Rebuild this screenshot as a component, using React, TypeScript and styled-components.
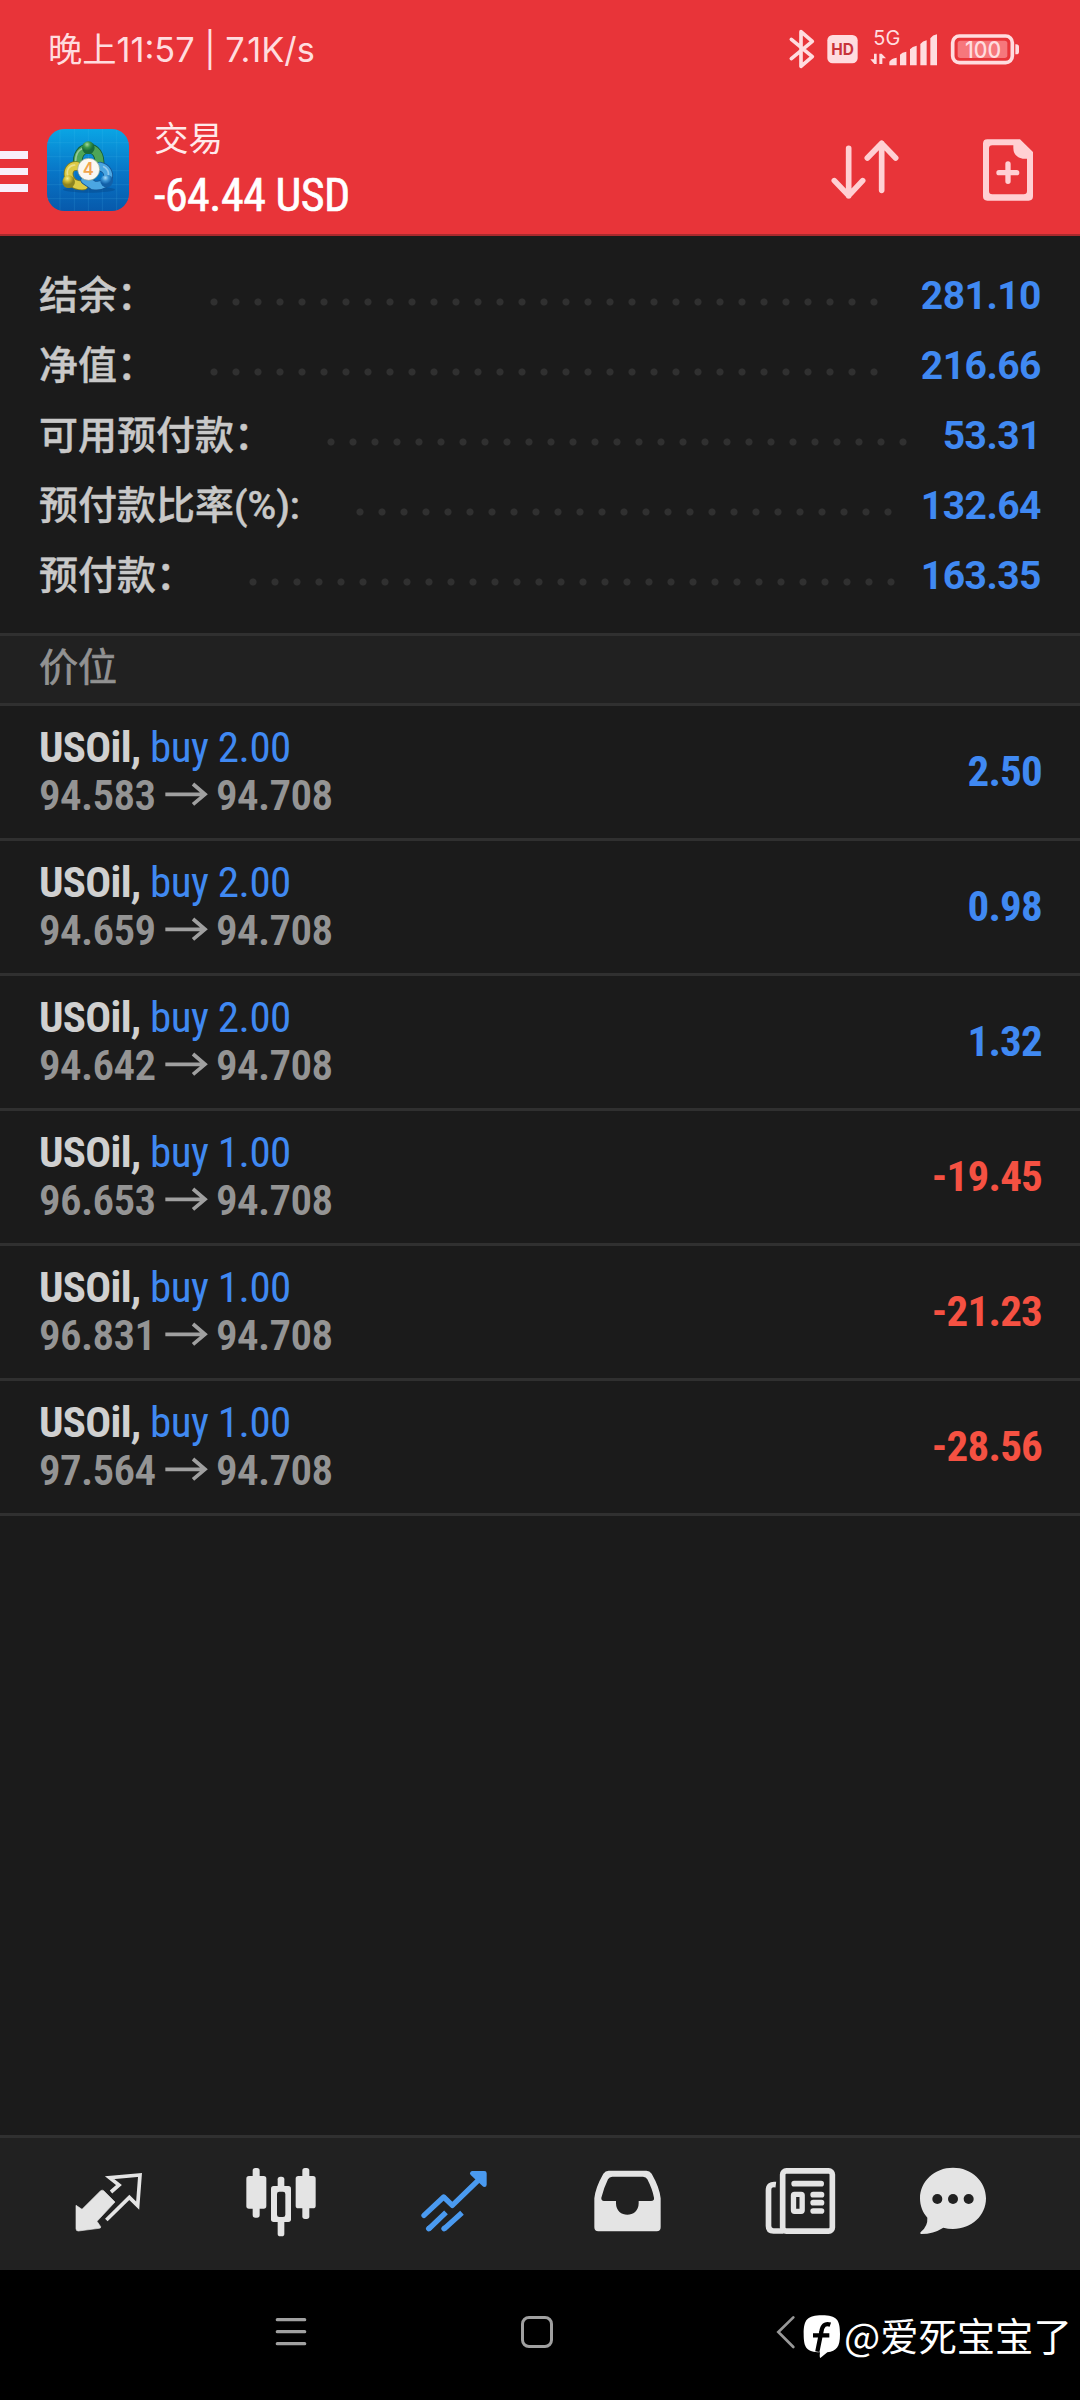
import React from "react";
import styled, { createGlobalStyle } from "styled-components";

const Global = createGlobalStyle`
  * { box-sizing: border-box; }
  body { margin: 0; background: #000; }
  svg { display: block; flex: none; overflow: visible; }
`;

const sans = `Roboto, "Noto Sans CJK SC", sans-serif`;
const condensed = `"Roboto Condensed", Roboto, "Noto Sans CJK SC", sans-serif`;
const blue = "#4089f2";
const red = "#f55142";
const pink = "#ffdcdf";
const rose = "#ffd0d3";
const pale = "#e4e4e4";
const line = "#303030";

const Screen = styled.div`
  width: 1080px;
  height: 2400px;
  display: flex;
  flex-direction: column;
  overflow: hidden;
  background: #1b1b1b;
  font-family: ${sans};
`;

const Header = styled.header`
  height: 236px;
  background: #e83439;
  border-bottom: 2px solid #a82a2d;
  display: flex;
  flex-direction: column;
  flex: none;
`;

const StatusBar = styled.div`
  height: 106px;
  padding: 0 60px 8px 48px;
  display: flex;
  align-items: center;
`;

const Clock = styled.span`
  flex: 1;
  padding-top: 2px;
  font: 400 34.3px/50px Inter, "Noto Sans CJK SC", sans-serif;
  color: ${pink};
  white-space: pre;
`;

const StatusIcons = styled.div`
  display: flex;
  align-items: center;
  gap: 12px;
`;

const AppBar = styled.div`
  height: 128px;
  display: flex;
  align-items: center;
`;

const MenuButton = styled.button`
  width: 28px;
  margin: 3px 19px 0 0;
  padding: 0;
  border: 0;
  background: none;
  display: flex;
  flex-direction: column;
  gap: 9px;
`;

const MenuBar = styled.i`
  height: 7.5px;
  background: #f8f0fa;
`;

const Titles = styled.div`
  flex: 1;
  margin: 0 0 0 25px;
  display: flex;
  flex-direction: column;
`;

const Title = styled.div`
  font-size: 34.5px;
  line-height: 50px;
  color: #ffe9ea;
`;

const Profit = styled.div`
  font: 400 46px/62px ${condensed};
  font-stretch: 75%;
  letter-spacing: -0.5px;
  color: #fff;
  -webkit-text-stroke: 0.6px #fff;
`;

const Actions = styled.div`
  display: flex;
  gap: 81px;
  padding-right: 45px;
`;

const Summary = styled.dl`
  margin: 0;
  height: 397px;
  padding: 25px 39px 0;
  flex: none;
`;

const SummaryRow = styled.div`
  height: 70px;
  display: flex;
  align-items: center;
`;

const Label = styled.dt`
  font-size: 39px;
  font-weight: 500;
  line-height: 70px;
  color: #c8c8c8;
  -webkit-text-stroke: 0.4px #c8c8c8;
`;

const Dots = styled.span<{ $count: number; $lead: number }>`
  width: ${(p) => p.$count * 22}px;
  height: 8px;
  margin: 12px 0 0 ${(p) => p.$lead}px;
  background: radial-gradient(circle, #303030 3px, transparent 4px) 0 0 / 22px 8px;
`;

const Amount = styled.dd`
  margin: 0 0 0 auto;
  font-size: 39px;
  font-weight: 700;
  letter-spacing: -0.5px;
  line-height: 70px;
  color: ${blue};
`;

const SectionTitle = styled.h2`
  margin: 0;
  height: 73px;
  flex: none;
  padding: 0 39px;
  border-top: 3px solid ${line};
  border-bottom: 3px solid ${line};
  background: #212121;
  font-size: 39px;
  font-weight: 400;
  line-height: 64px;
  color: #929292;
  -webkit-text-stroke: 0.7px #929292;
`;

const SectionBody = styled.main`
  flex: 1;
`;

const Position = styled.div`
  height: 135px;
  padding: 0 38px 0 39px;
  border-bottom: 3px solid ${line};
  display: flex;
  align-items: center;
  justify-content: space-between;
  font-family: ${condensed};
  font-stretch: 75%;
  font-size: 43px;
  letter-spacing: -0.5px;
`;

const Deal = styled.div`
  padding-bottom: 2px;
  display: flex;
  flex-direction: column;
`;

const Order = styled.div`
  line-height: 48px;
  color: ${blue};
`;

const Symbol = styled.b`
  font-weight: 700;
  letter-spacing: -0.7px;
  color: #d0d0d0;
`;

const Prices = styled.div`
  display: flex;
  align-items: center;
  line-height: 48px;
  font-weight: 600;
  letter-spacing: -0.65px;
  color: #949494;
`;

const Result = styled.div<{ $loss: boolean }>`
  padding-bottom: 2px;
  font-weight: 700;
  letter-spacing: -0.8px;
  color: ${(p) => (p.$loss ? red : blue)};
`;

const TabBar = styled.nav`
  height: 135px;
  flex: none;
  padding-left: 21.5px;
  border-top: 3px solid ${line};
  background: #212121;
  display: flex;
`;

const Tab = styled.a<{ $width?: number }>`
  width: ${(p) => p.$width ?? 173}px;
  display: flex;
  align-items: center;
  justify-content: center;
`;

const SystemBar = styled.footer`
  height: 130px;
  flex: none;
  padding: 0 0 6px 275px;
  background: #000;
  display: flex;
  align-items: center;
`;

const HomeButton = styled.i`
  width: 32px;
  height: 32px;
  flex: none;
  margin: 0 223px 0 214px;
  border: 3px solid #a0a0a0;
  border-radius: 8px;
`;

const Watermark = styled.div`
  display: flex;
  align-items: center;
  gap: 3px;
  margin-left: 7px;
  padding-top: 6px;
  font: 400 38.3px/56px "Noto Sans CJK SC", sans-serif;
  color: #fff;
  white-space: nowrap;
`;

const summary = [
  { label: "结余：", value: "281.10", dots: 31, lead: 46.5 },
  { label: "净值：", value: "216.66", dots: 31, lead: 46.5 },
  { label: "可用预付款：", value: "53.31", dots: 27, lead: 46.5 },
  { label: "预付款比率(%):", value: "132.64", dots: 25, lead: 48.5 },
  { label: "预付款：", value: "163.35", dots: 30, lead: 46.5 },
];

const positions = [
  { volume: "2.00", open: "94.583", result: "2.50" },
  { volume: "2.00", open: "94.659", result: "0.98" },
  { volume: "2.00", open: "94.642", result: "1.32" },
  { volume: "1.00", open: "96.653", result: "-19.45" },
  { volume: "1.00", open: "96.831", result: "-21.23" },
  { volume: "1.00", open: "97.564", result: "-28.56" },
];

const Bluetooth = () => (
  <svg width="26" height="42" viewBox="147 83 78 126" fill="none" stroke={pink} strokeWidth="11" strokeLinejoin="round" strokeLinecap="round">
    <path d="M154 117L217 169L183 198V94L217 123L154 175" />
  </svg>
);

const Hd = () => (
  <svg width="31" height="42" viewBox="262 83 93 126">
    <rect x="263" y="104" width="91" height="85" rx="16" fill={pink} />
    <text x="308.500" y="164" textAnchor="middle" textLength="68" lengthAdjust="spacingAndGlyphs" fontFamily="Inter, sans-serif" fontWeight="700" fontSize="46" fill="#c8333a">HD</text>
  </svg>
);

const Signal = () => (
  <svg width="68" height="42" viewBox="390 83 204 126" fill={pink}>
    <text x="400" y="135" textLength="81" lengthAdjust="spacingAndGlyphs" fontFamily="Inter, sans-serif" fontSize="60">5G</text>
    <path d="M402 160h8v31h-7l-12-14h11zM418 191v-31h7l13 14h-11v17z" />
    <path d="M448 195V184Q455 174 470 172V195zM480 195V163Q486 156 499 154V195zM510 195V147Q517 138 530 136V195zM541 195V131Q548 122 560 120V195zM571 195V114Q578 104 591 102V195z" />
  </svg>
);

const Battery = () => (
  <svg width="70" height="42" viewBox="630 83 210 126">
    <rect x="638" y="107" width="179" height="80" rx="20" fill="none" stroke={pink} strokeWidth="11" />
    <rect x="653" y="121" width="149" height="52" rx="8" fill="#f6777c" />
    <path d="M826 132h3a8 8 0 0 1 8 8v14a8 8 0 0 1-8 8h-3z" fill={pink} />
    <text x="729" y="172" textAnchor="middle" textLength="108" lengthAdjust="spacingAndGlyphs" fontFamily="Inter, sans-serif" fontWeight="500" fontSize="67" fill={pink}>100</text>
  </svg>
);

const AppLogo = () => (
  <svg width="82" height="82" viewBox="51 57 246 246">
    <defs>
      <linearGradient id="sky" x1="0" y1="0" x2="0" y2="1">
        <stop offset="0" stopColor="#0aa5e4" />
        <stop offset=".5" stopColor="#0877c8" />
        <stop offset="1" stopColor="#0759ab" />
      </linearGradient>
      <radialGradient id="green" cx=".4" cy=".25"><stop offset="0" stopColor="#a5d69a" /><stop offset=".5" stopColor="#3c9a4a" /><stop offset="1" stopColor="#1a6b39" /></radialGradient>
      <radialGradient id="gold" cx=".4" cy=".25"><stop offset="0" stopColor="#f6ee8e" /><stop offset=".5" stopColor="#cdb932" /><stop offset="1" stopColor="#8d8420" /></radialGradient>
      <radialGradient id="azure" cx=".4" cy=".25"><stop offset="0" stopColor="#a8dcfa" /><stop offset=".5" stopColor="#3c94d6" /><stop offset="1" stopColor="#1260a8" /></radialGradient>
    </defs>
    <rect x="51" y="57" width="246" height="246" rx="52" fill="url(#sky)" />
    <path d="M90 59V301M133 57V303M175 57V303M217 57V303M260 59V301M51 98H297M51 140H297M51 182H297M51 224H297M51 266H297" stroke="#5cc5f0" strokeOpacity=".22" strokeWidth="2" />
    <ellipse cx="177" cy="239" rx="78" ry="9" fill="#063c78" opacity=".35" />
    <g fill="none" strokeLinecap="round">
      <path d="M144 166C134 100 216 96 208 168" stroke="#155c36" strokeWidth="29" />
      <path d="M144 166C134 100 216 96 208 168" stroke="#4ea557" strokeWidth="24" />
      <path d="M139 168C104 166 106 230 161 226" stroke="#7d7a22" strokeWidth="29" />
      <path d="M139 168C104 166 106 230 161 226" stroke="#dccb45" strokeWidth="24" />
      <path d="M211 170C248 178 242 234 190 226L166 210" stroke="#145594" strokeWidth="29" />
      <path d="M211 170C248 178 242 234 190 226L166 210" stroke="#4ba6e2" strokeWidth="24" />
      <path d="M137 151C139 119 158 110 175 120M114 199C107 180 118 166 134 165M221 170C240 180 237 198 230 203" stroke="#fff" strokeOpacity=".4" strokeWidth="5" />
    </g>
    <circle cx="175" cy="113" r="19" fill="url(#green)" />
    <circle cx="116" cy="215" r="19" fill="url(#gold)" />
    <circle cx="230" cy="213" r="19" fill="url(#azure)" />
    <circle cx="176" cy="178" r="33" fill="#faf7f2" stroke="#8ba18c" strokeWidth="2" />
    <text x="175" y="196" textAnchor="middle" fontFamily="Inter, sans-serif" fontWeight="600" fontSize="50" fill="#f0a54e">4</text>
  </svg>
);

const SortIcon = () => (
  <svg width="70" height="66" viewBox="270 411 210 198" fill="none" stroke={rose} strokeWidth="17" strokeLinecap="round" strokeLinejoin="round">
    <path d="M326 445V587M283 542L326 587L368 542M425 571V430M382 474L425 430L467 474" />
  </svg>
);

const NewOrderIcon = () => (
  <svg width="54" height="66" viewBox="723 411 162 198">
    <path fillRule="evenodd" fill={rose} d="M742 418H840L879 456V589Q879 602 866 602H742Q729 602 729 589V431Q729 418 742 418ZM757 436Q747 436 747 446V573Q747 583 757 583H851Q861 583 861 573V476H848Q820 471 820 444V436Z" />
    <path d="M804 492V544M777 518H830" stroke={rose} strokeWidth="16" strokeLinecap="round" />
  </svg>
);

const PriceArrow = () => (
  <svg width="60.500" height="26" viewBox="467 485 181.500 78" fill="none" stroke="#a0a0a0" strokeWidth="11">
    <path d="M498 522H617M581 491L617 522L581 552" />
  </svg>
);

const QuotesIcon = () => (
  <svg width="80" height="80" viewBox="204 132 240 240">
    <path d="M228 256L246 268L302 212Q307 209 311 212L345 246L291 304L302 320Q303 325 297 325L235 333Q228 333 228 326Z" fill={pale} stroke={pale} strokeWidth="2" strokeLinejoin="round" />
    <path d="M333 216L357 195L329 173L420 165L413 257L388 232L319 300" fill="none" stroke={pale} strokeWidth="11" />
  </svg>
);

const ChartIcon = () => (
  <svg width="80" height="80" viewBox="723 132 240 240" fill={pale}>
    <rect x="739" y="168" width="60" height="98" rx="8" />
    <rect x="758" y="144" width="21" height="149" rx="8" />
    <rect x="887" y="168" width="60" height="97" rx="8" />
    <rect x="907" y="144" width="21" height="153" rx="8" />
    <rect x="833" y="170" width="20" height="40" rx="8" />
    <rect x="833" y="295" width="20" height="54" rx="8" />
    <rect x="813" y="198" width="60" height="108" rx="8" />
    <rect x="831" y="215" width="25" height="76" rx="7" fill="#212121" />
  </svg>
);

const TradeIcon = () => (
  <svg width="80" height="80" viewBox="162 132 240 240" fill="none" stroke="#4a9af0" strokeWidth="16" strokeLinecap="round" strokeLinejoin="round">
    <path d="M192 286L251 231L277 256L370 166" />
    <path d="M206 327L258 277M252 327L306 278" strokeLinecap="butt" />
    <path d="M206 326L207 325M252 326L253 325" />
    <path d="M337 160H373V194Z" fill="#4a9af0" strokeWidth="14" />
  </svg>
);

const HistoryIcon = () => (
  <svg width="80" height="80" viewBox="681 132 240 240">
    <path fillRule="evenodd" fill={pale} d="M746 152H859Q869 152 875 161Q899 203 902 235V322Q902 334 890 334H715Q703 334 703 322V235Q706 203 730 161Q736 152 746 152ZM757 170Q748 170 744 178Q731 205 724 233Q723 242 732 243H768V250C768 296 836 296 836 250V243H873Q884 242 882 233Q877 207 862 178Q858 170 849 170Z" />
  </svg>
);

const NewsIcon = () => (
  <svg width="80" height="80" viewBox="121.500 132 240 240" fill="none" stroke={pale} strokeWidth="17">
    <rect x="189.500" y="152.500" width="149" height="181" rx="11" />
    <path d="M169 194C153 192 147 198 147 211V318Q147 333 162 333H192" />
    <path d="M224 191H305M281 224H306M281 248H306M281 273H306" strokeLinecap="round" />
    <rect x="222" y="223" width="26" height="51" rx="3" strokeWidth="16" />
  </svg>
);

const ChatIcon = () => (
  <svg width="80" height="80" viewBox="579 132 240 240">
    <path fill={pale} d="M699 143C755 143 798 184 798 235C798 287 755 327 699 327Q684 327 670 323Q640 342 604 342Q598 340 603 335Q624 318 622 293C608 278 600 257 600 235C600 184 643 143 699 143Z" />
    <g fill="#212121"><circle cx="652" cy="237" r="15" /><circle cx="699" cy="237" r="15" /><circle cx="746" cy="237" r="15" /></g>
  </svg>
);

const RecentsIcon = () => (
  <svg width="32" height="32" viewBox="105 138 96 96" stroke="#a0a0a0" strokeWidth="10" strokeLinecap="round">
    <path d="M112 149H194M112 185H194M112 221H194" />
  </svg>
);

const BackIcon = () => (
  <svg width="20" height="34" viewBox="108 135 60 102" fill="none" stroke="#989898" strokeWidth="8" strokeLinecap="round">
    <path d="M160 142L115 186L160 231" />
  </svg>
);

const BubbleLogo = () => (
  <svg width="38" height="44" viewBox="189 144 114 132">
    <path fill="#fff" d="M246 151C290 151 300 164 300 207C300 246 290 258 262 262L241 279Q238 278 240 262C200 261 191 249 191 207C191 164 202 151 246 151Z" />
    <path d="M271 179Q248 171 244 201L232 260M219 211H268" fill="none" stroke="#000" strokeWidth="13" />
  </svg>
);

export default function App() {
  return (
    <Screen>
      <Global />
      <Header>
        <StatusBar>
          <Clock>晚上11:57 | 7.1K/s</Clock>
          <StatusIcons><Bluetooth /><Hd /><Signal /><Battery /></StatusIcons>
        </StatusBar>
        <AppBar>
          <MenuButton aria-label="menu"><MenuBar /><MenuBar /><MenuBar /></MenuButton>
          <AppLogo />
          <Titles>
            <Title>交易</Title>
            <Profit>-64.44 USD</Profit>
          </Titles>
          <Actions><SortIcon /><NewOrderIcon /></Actions>
        </AppBar>
      </Header>
      <Summary>
        {summary.map((s) => (
          <SummaryRow key={s.label}>
            <Label>{s.label}</Label>
            <Dots $count={s.dots} $lead={s.lead} />
            <Amount>{s.value}</Amount>
          </SummaryRow>
        ))}
      </Summary>
      <SectionTitle>价位</SectionTitle>
      <SectionBody>
        {positions.map((p) => (
          <Position key={p.open}>
            <Deal>
              <Order><Symbol>USOil,</Symbol> buy {p.volume}</Order>
              <Prices>{p.open}<PriceArrow />94.708</Prices>
            </Deal>
            <Result $loss={p.result.startsWith("-")}>{p.result}</Result>
          </Position>
        ))}
      </SectionBody>
      <TabBar>
        <Tab><QuotesIcon /></Tab>
        <Tab><ChartIcon /></Tab>
        <Tab><TradeIcon /></Tab>
        <Tab><HistoryIcon /></Tab>
        <Tab><NewsIcon /></Tab>
        <Tab $width={132}><ChatIcon /></Tab>
      </TabBar>
      <SystemBar>
        <RecentsIcon />
        <HomeButton />
        <BackIcon />
        <Watermark><BubbleLogo />@爱死宝宝了</Watermark>
      </SystemBar>
    </Screen>
  );
}
